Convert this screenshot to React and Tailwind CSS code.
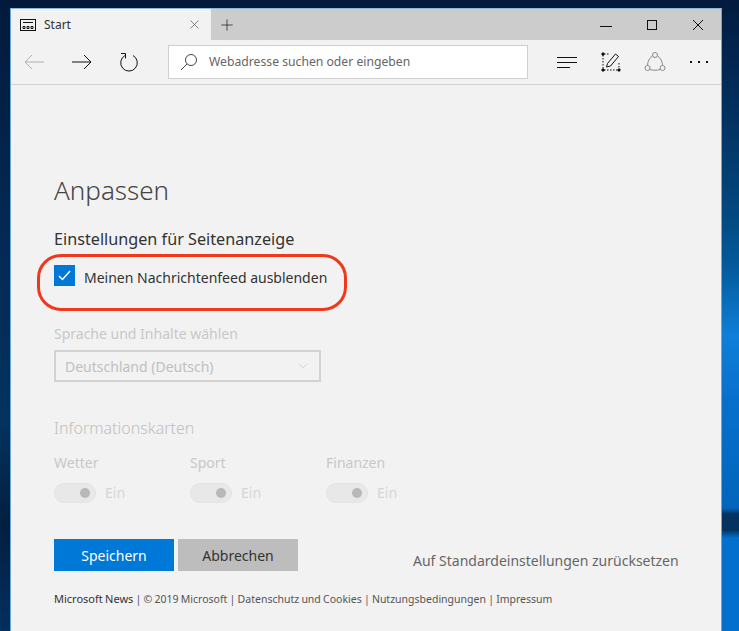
import React from "react";
import { Plus, X, ChevronDown } from "lucide-react";

function Toggle({ label }) {
  return (
    <div className="w-[136px]">
      <div className="text-[14px] leading-[20px] text-[#c8c8c8]">{label}</div>
      <div className="mt-[9px] flex items-center gap-[9px]">
        <div className="flex h-[20px] w-[42px] items-center justify-end rounded-full border border-[#e4e4e4] bg-[#e8e8e8] pr-[5px]">
          <div className="h-[10px] w-[10px] rounded-full bg-[#b8b8b8]" />
        </div>
        <span className="text-[14px] text-[#d6d6d6]">Ein</span>
      </div>
    </div>
  );
}

export default function App() {
  return (
    <div className="flex h-[631px] w-[739px] overflow-hidden bg-[linear-gradient(to_bottom,#021a3c_0,#032a55_250px,#03335f_420px,#021f40_525px,#03305f_631px)]">
      <div className="w-[10px] shrink-0" />
      <div className="mt-[8px] flex h-[623px] w-[712px] shrink-0 flex-col border-x border-t border-x-[#6aa6d4] border-t-[#8fb8d8] bg-[#f2f2f2] font-['Noto_Sans',sans-serif]">
        <div className="flex h-[31px] bg-[#cccccc]">
          <div className="flex w-[200px] items-center bg-[#f2f2f2] pl-[9px] pr-[9px]">
            <svg width="16" height="12" viewBox="0 0 16 12" fill="none" stroke="#111" strokeWidth="1">
              <rect x="0.5" y="0.5" width="15" height="11" />
              <path d="M3 3.500h10" />
              <path d="M3 7.500h2v2H3zM7 7.500h2v2H7zM11 7.500h2v2h-2z" />
            </svg>
            <span className="ml-[8px] text-[12px] text-[#333]">Start</span>
            <X className="ml-auto h-[15px] w-[15px] text-[#444]" strokeWidth={1} />
          </div>
          <Plus className="ml-[7px] mt-[7px] h-[18px] w-[18px] text-[#222]" strokeWidth={1} />
          <div className="ml-auto flex items-center pr-[17px] text-[#111]">
            <svg width="12" height="12" viewBox="0 0 12 12" fill="none" stroke="currentColor"><path d="M0 7.500h12" /></svg>
            <svg className="ml-[34px]" width="12" height="12" viewBox="0 0 12 12" fill="none" stroke="currentColor"><rect x="1.500" y="1.500" width="9" height="9" strokeWidth="1" /></svg>
            <svg className="ml-[34px]" width="12" height="12" viewBox="0 0 12 12" fill="none" stroke="currentColor"><path d="M1 1l10 10M11 1L1 11" /></svg>
          </div>
        </div>
        <div className="flex h-[45px] items-center border-b border-[#d0d0d0]">
          <svg className="ml-[13px]" width="20" height="16" viewBox="0 0 20 16" fill="none" stroke="#b0b0b0"><path d="M20 8H1M8 1L1 8l7 7" /></svg>
          <svg className="ml-[28px]" width="20" height="16" viewBox="0 0 20 16" fill="none" stroke="#111"><path d="M0 8h19M12 1l7 7-7 7" /></svg>
          <svg className="ml-[27px]" width="20" height="20" viewBox="0 0 20 20" fill="none" stroke="#111"><path d="M6 3.500a8.300 8.300 0 1 0 8 0" /><path d="M2 1.500h4.500v5" /></svg>
          <div className="ml-[29px] flex h-[34px] w-[360px] items-center border border-[#cfcfcf] bg-white pl-[11px]">
            <svg width="18" height="18" viewBox="0 0 18 18" fill="none" stroke="#444"><circle cx="11" cy="7" r="5.500" /><path d="M7 11l-6 6" /></svg>
            <span className="ml-[11px] pt-[1px] text-[12.2px] text-[#666]">Webadresse suchen oder eingeben</span>
          </div>
          <div className="ml-[29px] flex w-[20px] flex-col gap-[4px]">
            <div className="h-px w-[20px] bg-[#111]" />
            <div className="h-px w-[20px] bg-[#111]" />
            <div className="h-px w-[13px] bg-[#111]" />
          </div>
          <svg className="ml-[24px]" width="20" height="20" viewBox="0 0 20 20" fill="none" stroke="#111">
            <path d="M2 3v15M3 2h6M3 18h15M18 11v7" strokeDasharray="1.500 1.500" />
            <path d="M5.500 15l1-3.500 8-9.500 3 2.500-8 9.500z" />
            <path d="M1 1h2v2H1zM1 17h2v2H1zM17 17h2v2h-2z" fill="#111" />
          </svg>
          <svg className="ml-[23px]" width="22" height="22" viewBox="0 0 22 22" fill="none" stroke="#8a8a8a">
            <circle cx="11" cy="4" r="2.500" />
            <circle cx="3.500" cy="17" r="2.500" />
            <circle cx="18.500" cy="17" r="2.500" />
            <path d="M8.500 4.800C5.500 7 3.500 10.500 3.500 14.500M13.500 4.800c3 2.200 5 5.700 5 9.700M6 18.500c3 1 7 1 10 0" />
          </svg>
          <div className="ml-[24px] flex gap-[6px]">
            <div className="h-[2px] w-[2px] bg-[#111]" />
            <div className="h-[2px] w-[2px] bg-[#111]" />
            <div className="h-[2px] w-[2px] bg-[#111]" />
          </div>
        </div>
        <div className="flex-1 pl-[43px] pt-[87px]">
          <h1 className="text-[26px] font-light leading-[36px] text-[#444]">Anpassen</h1>
          <h2 className="mt-[19px] text-[16.2px] leading-[24px] text-[#333]">Einstellungen für Seitenanzeige</h2>
          <div className="relative mt-[14px] flex items-start gap-[9px]">
            <div className="flex h-[21px] w-[21px] items-center justify-center bg-[#0078d7]">
              <svg width="13" height="11" viewBox="0 0 13 11" fill="none" stroke="white" strokeWidth="1.500"><path d="M1 6l3.500 3.500L12 1" /></svg>
            </div>
            <span className="pt-[2px] text-[14px] leading-[22px] text-[#333]">Meinen Nachrichtenfeed ausblenden</span>
            <div className="absolute left-[-17px] top-[-11px] h-[57px] w-[310px] rounded-[24px] border-[3px] border-[#f0391c]" />
          </div>
          <div className="mt-[35px] text-[14px] leading-[20px] text-[#c8c8c8]">Sprache und Inhalte wählen</div>
          <div className="mt-[6px] flex h-[32px] w-[267px] items-center justify-between border-2 border-[#d2d2d2] pl-[9px] pr-[8px]">
            <span className="text-[14px] text-[#c0c0c0]">Deutschland (Deutsch)</span>
            <ChevronDown className="h-[16px] w-[16px] text-[#c8c8c8]" strokeWidth={1} />
          </div>
          <div className="mt-[34px] text-[16px] font-light leading-[24px] text-[#c0c0c0]">Informationskarten</div>
          <div className="mt-[13px] flex">
            <Toggle label="Wetter" />
            <Toggle label="Sport" />
            <Toggle label="Finanzen" />
          </div>
          <div className="mt-[36px] flex items-start">
            <button className="h-[32px] w-[120px] bg-[#0078d7] text-[14px] text-white">Speichern</button>
            <button className="ml-[4px] h-[32px] w-[120px] bg-[#bdbdbd] text-[14px] text-[#333]">Abbrechen</button>
            <span className="ml-[115px] mt-[12px] text-[14px] leading-[20px] text-[#666]">Auf Standardeinstellungen zurücksetzen</span>
          </div>
          <div className="mt-[20px] text-[10.5px] leading-[16px] text-[#555] [word-spacing:-0.5px]">
            <span className="text-[11px] text-[#333]">Microsoft News</span> | © 2019 Microsoft | Datenschutz und Cookies | Nutzungsbedingungen | Impressum
          </div>
        </div>
      </div>
      <div className="h-[631px] flex-1 bg-[linear-gradient(to_bottom,#021b3e_0,#02305f_110px,#024a82_220px,#045c9e_270px,#0f7fd8_335px,#0870cc_400px,#0265bb_508px,#04335f_514px,#04335f_530px,#0270cc_538px,#0270cc_631px)]" />
    </div>
  );
}
